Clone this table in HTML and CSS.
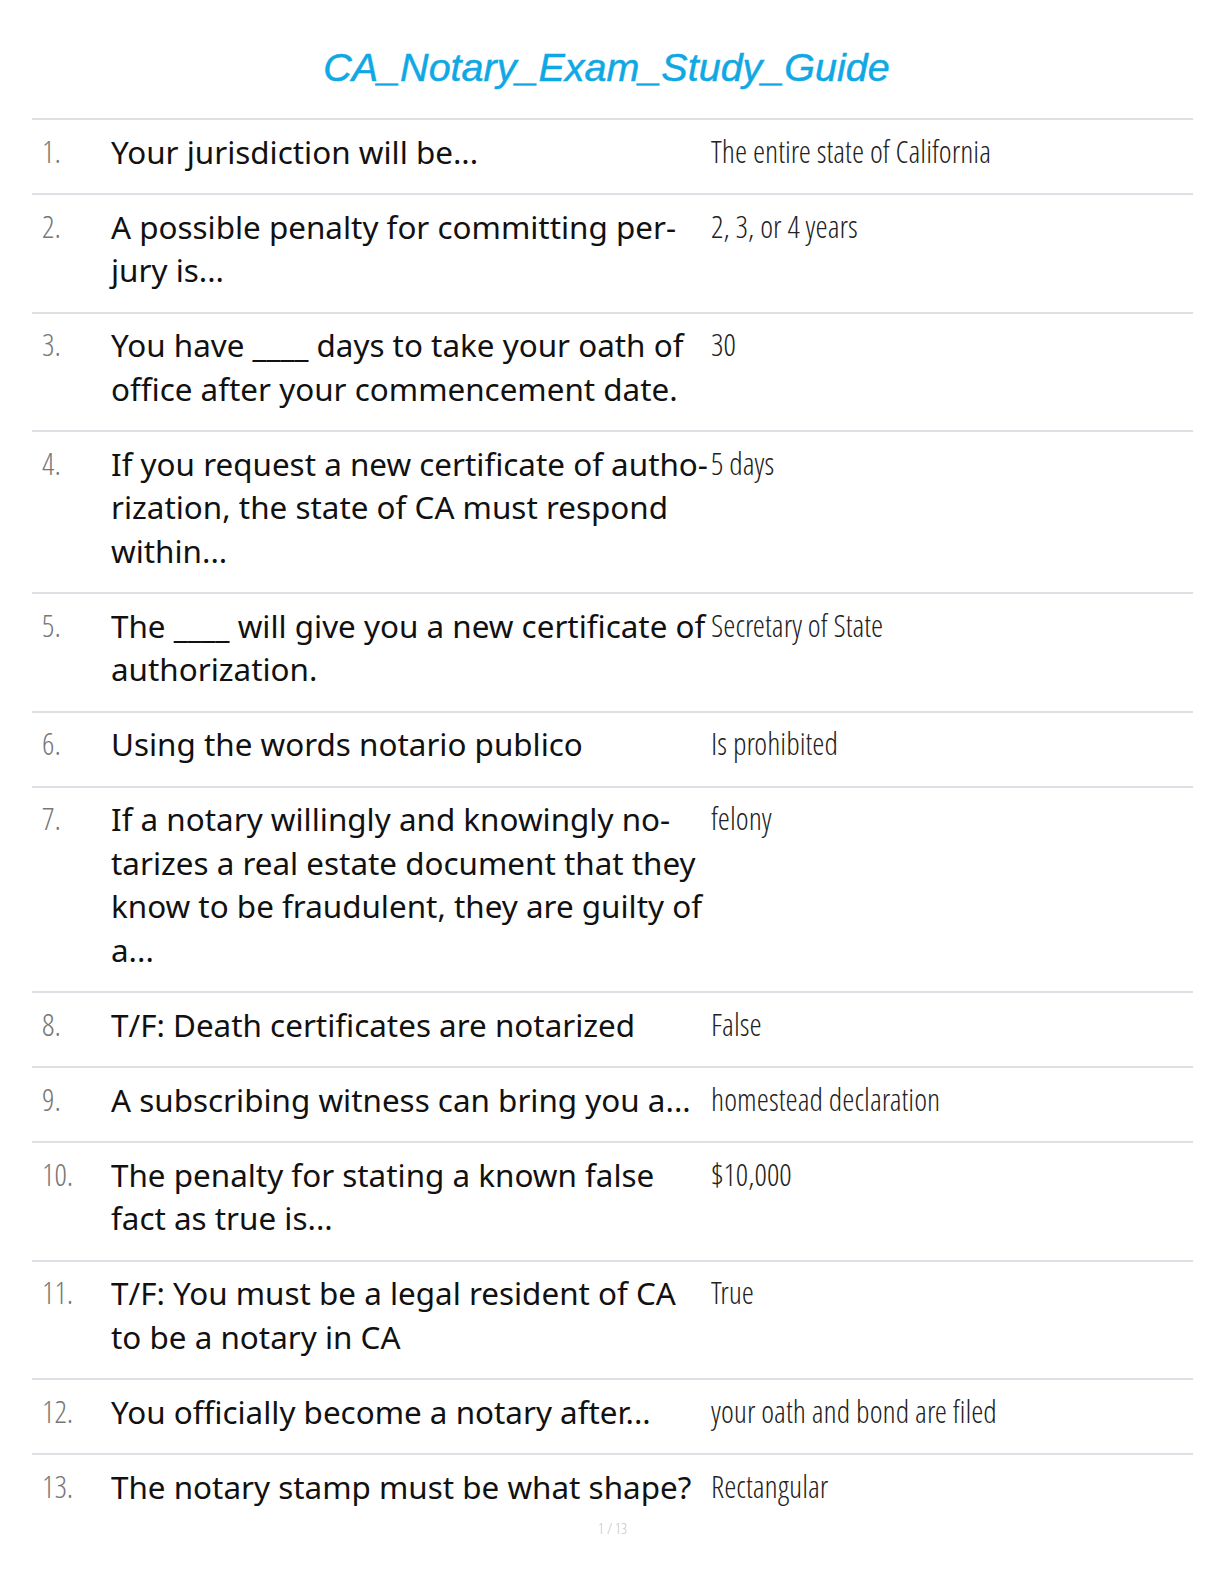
FILE: index.html
```html
<!DOCTYPE html>
<html lang="en">
  <head>
    <meta charset="utf-8" />
    <title>CA_Notary_Exam_Study_Guide</title>
    <link rel="stylesheet" href="styles.css">
  </head>
  <body>
    <div class="page">
      <h1 class="title">CA_Notary_Exam_Study_Guide</h1>

      <div class="cards">
        <div class="card">
          <div class="num">1.</div>
          <div class="term">Your jurisdiction will be...</div>
          <div class="def">The entire state of California</div>
        </div>
        <div class="card">
          <div class="num">2.</div>
          <div class="term">A possible penalty for committing per&shy;jury is...</div>
          <div class="def">2, 3, or 4 years</div>
        </div>
        <div class="card">
          <div class="num">3.</div>
          <div class="term">You have ____ days to take your oath of office after your commencement date.</div>
          <div class="def">30</div>
        </div>
        <div class="card">
          <div class="num">4.</div>
          <div class="term">If you request a new certificate of autho&shy;rization, the state of CA must respond within...</div>
          <div class="def">5 days</div>
        </div>
        <div class="card">
          <div class="num">5.</div>
          <div class="term">The ____ will give you a new certificate of authorization.</div>
          <div class="def">Secretary of State</div>
        </div>
        <div class="card">
          <div class="num">6.</div>
          <div class="term">Using the words notario publico</div>
          <div class="def">Is prohibited</div>
        </div>
        <div class="card">
          <div class="num">7.</div>
          <div class="term">If a notary willingly and knowingly no&shy;tarizes a real estate document that they know to be fraudulent, they are guilty of a...</div>
          <div class="def">felony</div>
        </div>
        <div class="card">
          <div class="num">8.</div>
          <div class="term">T/F: Death certificates are notarized</div>
          <div class="def">False</div>
        </div>
        <div class="card">
          <div class="num">9.</div>
          <div class="term">A subscribing witness can bring you a...</div>
          <div class="def">homestead declaration</div>
        </div>
        <div class="card">
          <div class="num">10.</div>
          <div class="term">The penalty for stating a known false fact as true is...</div>
          <div class="def">$10,000</div>
        </div>
        <div class="card">
          <div class="num">11.</div>
          <div class="term">T/F: You must be a legal resident of CA to be a notary in CA</div>
          <div class="def">True</div>
        </div>
        <div class="card">
          <div class="num">12.</div>
          <div class="term">You officially become a notary after...</div>
          <div class="def">your oath and bond are filed</div>
        </div>
        <div class="card last">
          <div class="num">13.</div>
          <div class="term">The notary stamp must be what shape?</div>
          <div class="def">Rectangular</div>
        </div>
      </div>

      <div class="pager">1 / 13</div>
    </div>
  </body>
</html>
```

FILE: styles.css
```css
* {
  box-sizing: border-box;
}

body {
  margin: 0;
  background-color: #fff;
  color: #111;
  font-family: "Noto Sans", "Open Sans", sans-serif;
}

.page {
  padding: 43px 31px 0 32px;
}

.title {
  margin: 0 0 27px;
  padding-right: 12px;
  text-align: center;
  font-family: "Liberation Sans", Arial, sans-serif;
  font-style: italic;
  font-weight: normal;
  font-size: 39.5px;
  line-height: 48px;
  color: #10a8e4;
  -webkit-text-stroke: 0.5px #10a8e4;
}

.cards {
  border-top: 2px solid #dfdfe6;
}

.card {
  display: grid;
  grid-template-columns: 79px 600px 1fr;
  padding: 9.5px 0 20px;
  border-bottom: 2px solid #dfdfe6;
}

.card.last {
  padding-bottom: 0;
  border-bottom: none;
}

.num,
.def {
  font-family: "Open Sans Condensed Light", "Open Sans", sans-serif;
  font-weight: 300;
  font-stretch: 75%;
  font-size: 31px;
  line-height: 43.5px;
}

.num {
  padding-left: 10px;
  color: #777;
}

.term {
  font-size: 31.4px;
  line-height: 43.5px;
  color: #111;
}

.def {
  color: #222;
}

.pager {
  margin-top: 10px;
  text-align: center;
  font-family: "Open Sans Condensed Light", "Open Sans", sans-serif;
  font-weight: 300;
  font-stretch: 75%;
  font-size: 15px;
  line-height: 20px;
  color: #c4c4c4;
}
```
